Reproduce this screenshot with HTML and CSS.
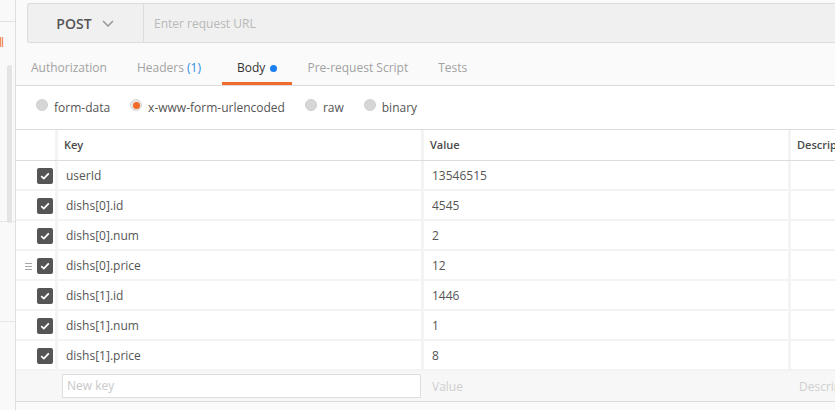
FILE: index.html
```html
<!DOCTYPE html>
<html>
<head>
<meta charset="utf-8">
<link rel="stylesheet" href="styles.css">
</head>
<body>
<div class="app">
  <aside class="sidebar">
    <div class="sb-top"></div>
    <div class="sb-item"><span class="sb-method">ll</span></div>
    <div class="sb-item sb-item2"></div>
    <div class="sb-scroll"></div>
  </aside>
  <main class="main">
    <div class="urlrow">
      <div class="urlbar">
        <div class="method">
          <span class="method-name">POST</span>
          <svg class="chev" width="12" height="7" viewBox="0 0 12 7"><polyline points="1,1 6,6 11,1" fill="none" stroke="#9a9a9a" stroke-width="1.6"/></svg>
        </div>
        <div class="url">Enter request URL</div>
      </div>
    </div>
    <nav class="tabs">
      <div class="tab">Authorization</div>
      <div class="tab tab-headers">Headers <span class="count">(1)</span></div>
      <div class="tab active">Body <span class="dot"></span></div>
      <div class="tab">Pre-request Script</div>
      <div class="tab">Tests</div>
    </nav>
    <div class="bodytypes">
      <label class="opt"><span class="radio"></span>form-data</label>
      <label class="opt"><span class="radio on"></span>x-www-form-urlencoded</label>
      <label class="opt"><span class="radio"></span>raw</label>
      <label class="opt"><span class="radio"></span>binary</label>
    </div>
    <div class="kv">
      <div class="kv-head">
        <div class="hcell"></div>
        <div class="hcell">Key</div>
        <div class="hcell">Value</div>
        <div class="hcell">Description</div>
      </div>
      <div class="kv-row"><div class="cell ck"><span class="box"><svg width="10" height="8" viewBox="0 0 10 8"><polyline points="1.2,4.2 3.8,6.6 8.8,1.4" fill="none" stroke="#fff" stroke-width="1.8"/></svg></span></div><div class="cell">userId</div><div class="cell">13546515</div><div class="cell"></div></div>
      <div class="kv-row"><div class="cell ck"><span class="box"><svg width="10" height="8" viewBox="0 0 10 8"><polyline points="1.2,4.2 3.8,6.6 8.8,1.4" fill="none" stroke="#fff" stroke-width="1.8"/></svg></span></div><div class="cell">dishs[0].id</div><div class="cell">4545</div><div class="cell"></div></div>
      <div class="kv-row"><div class="cell ck"><span class="box"><svg width="10" height="8" viewBox="0 0 10 8"><polyline points="1.2,4.2 3.8,6.6 8.8,1.4" fill="none" stroke="#fff" stroke-width="1.8"/></svg></span></div><div class="cell">dishs[0].num</div><div class="cell">2</div><div class="cell"></div></div>
      <div class="kv-row"><div class="cell ck"><span class="handle"><i></i><i></i><i></i></span><span class="box"><svg width="10" height="8" viewBox="0 0 10 8"><polyline points="1.2,4.2 3.8,6.6 8.8,1.4" fill="none" stroke="#fff" stroke-width="1.8"/></svg></span></div><div class="cell">dishs[0].price</div><div class="cell">12</div><div class="cell"></div></div>
      <div class="kv-row"><div class="cell ck"><span class="box"><svg width="10" height="8" viewBox="0 0 10 8"><polyline points="1.2,4.2 3.8,6.6 8.8,1.4" fill="none" stroke="#fff" stroke-width="1.8"/></svg></span></div><div class="cell">dishs[1].id</div><div class="cell">1446</div><div class="cell"></div></div>
      <div class="kv-row"><div class="cell ck"><span class="box"><svg width="10" height="8" viewBox="0 0 10 8"><polyline points="1.2,4.2 3.8,6.6 8.8,1.4" fill="none" stroke="#fff" stroke-width="1.8"/></svg></span></div><div class="cell">dishs[1].num</div><div class="cell">1</div><div class="cell"></div></div>
      <div class="kv-row"><div class="cell ck"><span class="box"><svg width="10" height="8" viewBox="0 0 10 8"><polyline points="1.2,4.2 3.8,6.6 8.8,1.4" fill="none" stroke="#fff" stroke-width="1.8"/></svg></span></div><div class="cell">dishs[1].price</div><div class="cell">8</div><div class="cell"></div></div>
      <div class="kv-new">
        <div class="ncell"></div>
        <div class="ncell"><div class="newkey">New key</div></div>
        <div class="ncell ph">Value</div>
        <div class="ncell ph">Description</div>
      </div>
    </div>
    <div class="footer"></div>
  </main>
</div>
</body>
</html>
```

FILE: styles.css
```css
* { box-sizing: border-box; }
html, body { margin: 0; padding: 0; }
body {
  width: 835px;
  height: 410px;
  overflow: hidden;
  font-family: "Open Sans", "Liberation Sans", sans-serif;
  font-size: 12px;
  color: #505050;
  background: #fafafa;
}
.app { display: flex; height: 410px; }

.sidebar {
  position: relative;
  width: 16px;
  flex: none;
  background: #f9f9f9;
  border-right: 1px solid #dedede;
  overflow: hidden;
}
.sb-top { height: 22px; border-bottom: 1px solid #e2e2e2; }
.sb-item { height: 200px; border-bottom: 1px solid #e6e6e6; padding-top: 14px; }
.sb-item2 { height: 100px; }
.sb-method {
  display: block;
  margin-left: -1px;
  font-size: 12px;
  font-weight: 400;
  letter-spacing: -1px;
  color: #f0742e;
  line-height: 14px;
}
.sb-scroll {
  position: absolute;
  left: 7px;
  top: 65px;
  width: 5px;
  height: 158px;
  border-radius: 3px;
  background: #e4e4e4;
}

.main { flex: 1; display: flex; flex-direction: column; min-width: 0; }

.urlrow { height: 43px; padding: 3px 0 0 11px; background: #fafafa; }
.urlbar {
  display: flex;
  height: 40px;
  background: #f0f0f0;
  border: 1px solid #dcdcdc;
  border-right: none;
  border-radius: 3px 0 0 3px;
}
.method {
  width: 116px;
  flex: none;
  display: flex;
  align-items: center;
  justify-content: center;
  gap: 10px;
  border-right: 1px solid #dcdcdc;
  padding-right: 1px;
}
.method-name { font-size: 14px; font-weight: 600; color: #555; letter-spacing: 0.1px; }
.chev { display: block; margin-top: 1px; }
.url { display: flex; align-items: center; padding-left: 10px; color: #b8b8b8; }

.tabs {
  display: flex;
  height: 43px;
  background: #fafafa;
  border-bottom: 1px solid #dcdcdc;
}
.tab {
  padding: 17px 15px 0;
  height: 42px;
  line-height: 16px;
  color: #a2a2a2;
  white-space: nowrap;
}
.tab-headers { padding-right: 21px; }
.tab .count { color: #2a8fe0; }
.tab.active { color: #333; border-bottom: 3px solid #f26b2a; }
.dot {
  display: inline-block;
  width: 7px;
  height: 7px;
  border-radius: 50%;
  background: #1a7ff0;
  margin-left: 2px;
  vertical-align: 0px;
}

.bodytypes {
  display: flex;
  align-items: center;
  height: 44px;
  padding-left: 20px;
  background: #fff;
  border-bottom: 1px solid #dcdcdc;
}
.opt { display: flex; align-items: center; margin-right: 20px; color: #555; }
.radio {
  width: 12px;
  height: 12px;
  border-radius: 50%;
  background: #d6d6d6;
  border: 1px solid #cfcfcf;
  margin-right: 6px;
  margin-top: -5px;
  position: relative;
}
.radio.on { background: #e6e6e6; border-color: #d8d8d8; }
.radio.on::after {
  content: "";
  position: absolute;
  left: 1.5px;
  top: 1.5px;
  width: 7px;
  height: 7px;
  border-radius: 50%;
  background: #f26b2a;
}

.kv { background: #fff; }
.kv-head, .kv-row, .kv-new {
  display: grid;
  grid-template-columns: 39px 363px 364px 1fr;
  column-gap: 3px;
}
.kv-head { height: 31px; background: #f3f3f3; border-bottom: 1px solid #dcdcdc; }
.hcell {
  background: #fff;
  font-size: 11px;
  font-weight: 600;
  color: #4a4a4a;
  padding-left: 6px;
  line-height: 30px;
  white-space: nowrap;
  overflow: hidden;
}
.kv-row { height: 30px; background: #f3f3f3; padding-bottom: 2px; }
.cell {
  background: #fff;
  padding: 2px 0 0 8px;
  line-height: 26px;
  color: #555;
  white-space: nowrap;
  overflow: hidden;
}
.cell.ck {
  display: flex;
  align-items: center;
  justify-content: flex-end;
  padding: 2px 2px 0 0;
  gap: 5px;
}
.box {
  width: 16px;
  height: 16px;
  border-radius: 2px;
  background: #555;
  display: flex;
  align-items: center;
  justify-content: center;
}
.box svg { display: block; }
.handle { display: flex; flex-direction: column; gap: 2px; width: 7px; }
.handle i { display: block; height: 1px; background: #a8a8a8; }

.kv-new { height: 30px; background: #f7f7f7; column-gap: 3px; }
.ncell { display: flex; align-items: center; white-space: nowrap; overflow: hidden; }
.newkey {
  width: 359px;
  height: 24px;
  margin-left: 4px;
  background: #fff;
  border: 1px solid #dedede;
  padding-left: 4px;
  line-height: 22px;
  color: #c8c8c8;
}
.ph { padding-left: 8px; color: #cfcfcf; }

.footer { flex: 1; background: #fafafa; border-top: 1px solid #dcdcdc; }
```
